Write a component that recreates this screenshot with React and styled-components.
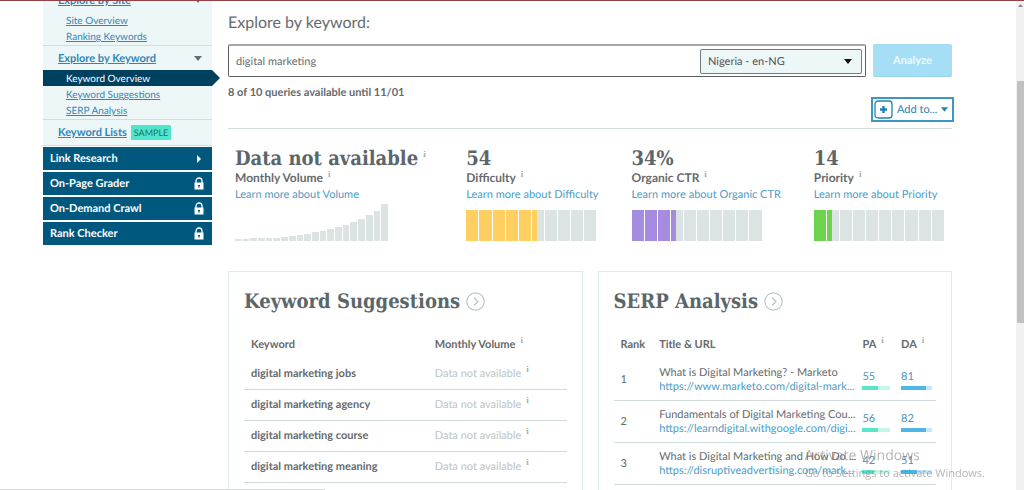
import React, { useState } from "react";
import styled, { createGlobalStyle, css } from "styled-components";

const GlobalStyle = createGlobalStyle`
  * {
    box-sizing: border-box;
  }
  body {
    margin: 0;
    background: #fff;
    color: #666a6c;
    font-family: Lato, "Liberation Sans", sans-serif;
    font-size: 11px;
    line-height: 16px;
    text-rendering: geometricPrecision;
  }
  button, input, select {
    font: inherit;
    color: inherit;
    text-rendering: inherit;
  }
  a {
    color: #4a9cc7;
    text-decoration: none;
  }
`;

const Shell = styled.div`
  display: grid;
  grid-template-columns: 1fr 8px;
  height: 100vh;
  overflow: hidden;
  border-top: 1px solid #963f44;
`;

const Page = styled.div`
  display: flex;
  gap: 16px;
  min-width: 0;
  padding: 0 64px 0 43px;
`;

/* scrollbar */

const ScrollTrack = styled.div`
  display: flex;
  flex-direction: column;
  align-items: flex-end;
  background: #f1f1f1;
`;

const ScrollArrow = styled.svg`
  width: 7px;
  height: 10px;
  fill: #8a8a8a;
`;

const ScrollThumb = styled.div`
  width: 7px;
  height: 46%;
  margin-top: 70px;
  background: #c1c1c1;
`;

/* side navigation */

const Sidebar = styled.nav`
  flex: 0 0 169px;
  margin-top: -13px;
`;

const NavGroup = styled.section`
  padding-bottom: 1px;
  border-bottom: 1px solid #d3dddf;
  background: #eef7f8;
`;

const NavHeading = styled.div`
  display: flex;
  align-items: center;
  gap: 4px;
  height: 24px;
  padding: 0 10px 0 15px;
  font-weight: bold;
  line-height: 18px;

  a {
    padding-top: 1px;
    color: #2e86b8;
    text-decoration: underline;
  }
  svg {
    margin-left: auto;
  }
`;

const NavItem = styled.a`
  position: relative;
  display: block;
  height: 16px;
  padding-left: 23px;
  font-size: 10px;
  line-height: 18px;
  color: #2e86b8;
  text-decoration: underline;

  ${(props) =>
    props.$active &&
    css`
      background: #00405f;
      color: #fff;
      text-decoration: none;

      &::after {
        content: "";
        position: absolute;
        top: 0;
        left: 100%;
        border: 8px solid transparent;
        border-left-color: #00405f;
        border-right-width: 0;
      }
    `}
`;

const Badge = styled.span`
  padding: 0 3px;
  border-radius: 1px;
  background: #50e6cc;
  color: #23715f;
  font-size: 9px;
  font-weight: normal;
  line-height: 15px;
`;

const ToolList = styled.div`
  display: grid;
  gap: 2px;
  padding-top: 1px;
`;

const ToolLink = styled.a`
  display: flex;
  align-items: center;
  justify-content: space-between;
  height: 23px;
  padding: 0 8px 0 7px;
  background: #00587f;
  color: #fff;
  font-weight: bold;
`;

/* main column */

const Main = styled.main`
  flex: 1;
  min-width: 0;
`;

const Title = styled.h1`
  margin: 12px 0 11px;
  font-size: 16px;
  font-weight: normal;
  line-height: 20px;
`;

const SearchForm = styled.form`
  display: flex;
  gap: 7px;
`;

const SearchBox = styled.div`
  display: flex;
  flex: 1;
  align-items: center;
  height: 33px;
  padding-right: 3px;
  border: 1px solid #5d5f66;
  border-top: 2px solid #a5a5ab;
  border-radius: 2px;
`;

const SearchInput = styled.input`
  flex: 1;
  min-width: 0;
  padding: 2px 7px 0;
  border: 0;
  outline: 0;
  background: none;
`;

const SelectWrap = styled.div`
  display: grid;
  flex: 0 0 162px;
  align-items: center;

  > * {
    grid-area: 1 / 1;
  }
  svg {
    justify-self: end;
    margin-right: 10px;
    pointer-events: none;
  }
`;

const LocaleSelect = styled.select`
  appearance: none;
  height: 25px;
  padding: 1px 7px 0;
  border: 1px solid #777b7d;
  border-radius: 2px;
  background: #eef7f7;
  color: #4c5052;
`;

const AnalyzeButton = styled.button`
  width: 79px;
  padding-top: 3px;
  border: 0;
  border-bottom: 1px solid #98d3ea;
  border-radius: 2px;
  background: #a6dff5;
  color: #eefaff;
  font-weight: bold;
`;

const QueryBar = styled.div`
  display: flex;
  justify-content: space-between;
  padding: 8px 0;
  border-bottom: 1px solid #d3dfdf;
`;

const AddButton = styled.button`
  display: flex;
  align-items: center;
  gap: 4px;
  width: 79px;
  height: 21px;
  margin-top: 14px;
  padding: 0 4px 0 1px;
  border: 0;
  outline: 2px solid #3d96c3;
  background: #fff;
  color: #2e7fae;
  white-space: nowrap;

  svg {
    flex: none;
  }
  svg:last-child {
    margin-left: auto;
  }
`;

const Metrics = styled.section`
  display: grid;
  grid-template-columns: 231fr 165fr 182fr 138fr;
  padding: 17px 0 30px 7px;
`;

const MetricValue = styled.div`
  color: #5c6669;
  font-family: "Roboto Slab", "DejaVu Serif Condensed", "DejaVu Serif", serif;
  font-size: 20px;
  font-stretch: condensed;
  font-weight: bold;
  line-height: 24px;
  white-space: nowrap;
`;

const MetricLabel = styled.div`
  font-size: 12px;
  font-weight: bold;
`;

const MetricLink = styled.a`
  display: block;
  height: 16px;
  line-height: 18px;
`;

const Chart = styled.div`
  display: grid;
  grid-auto-columns: 1fr;
  grid-auto-flow: column;
  align-items: end;
  gap: 1px;
  width: ${(props) => props.$width}px;
  height: 39px;
`;

const Bar = styled.div`
  background: #dbe4e3;
`;

const Segment = styled.div`
  height: 31px;
  background: linear-gradient(
    90deg,
    ${(props) => props.$color} ${(props) => props.$fill}%,
    #dbe4e3 ${(props) => props.$fill}%
  );
`;

const InfoMark = styled.sup`
  margin-left: 5px;
  color: #a3acae;
  font-family: "Liberation Serif", serif;
  font-size: 9px;
  font-weight: bold;
  line-height: 0;
`;

/* panels */

const Panels = styled.div`
  display: grid;
  grid-template-columns: 1fr 1fr;
  gap: 15px;
`;

const Panel = styled.section`
  min-width: 0;
  padding: 15px 15px 40px;
  border: 1px solid #dfe9e9;
`;

const PanelTitle = styled.h2`
  display: flex;
  align-items: center;
  gap: 6px;
  margin: 0 0 16px;
  color: #5c6669;
  font-family: "Roboto Slab", "DejaVu Serif Condensed", "DejaVu Serif", serif;
  font-size: 20px;
  font-stretch: condensed;
  line-height: 28px;
  white-space: nowrap;
`;

const Table = styled.table`
  width: 100%;
  table-layout: fixed;
  border-collapse: separate;
  border-spacing: 0;

  th {
    height: 28px;
    padding: 0 0 0 7px;
    text-align: left;
  }
  td {
    height: ${(props) => props.$rowHeight}px;
    padding: 0 0 0 7px;
    border-bottom: 1px solid #cfdcdb;
  }
`;

const Muted = styled.span`
  color: #bcc4c4;
`;

const Line = styled.div`
  line-height: 14px;
  white-space: nowrap;
`;

const Score = styled.div`
  color: #4a93bb;
  line-height: 14px;
`;

const ScoreTrack = styled.div`
  height: 4px;
  margin: 2px 4px 0 0;
  background: ${(props) => props.$track};
`;

const ScoreFill = styled.div`
  height: 100%;
  background: ${(props) => props.$color};
`;

/* desktop overlays */

const Watermark = styled.div`
  position: fixed;
  right: 39px;
  bottom: 7px;
  color: rgba(130, 130, 130, 0.6);
  font-family: "Open Sans", "Noto Sans", sans-serif;
  font-size: 11px;
  line-height: 18px;
  pointer-events: none;

  strong {
    display: block;
    font-size: 14px;
    font-weight: normal;
  }
`;

const StatusBubble = styled.div`
  position: fixed;
  bottom: 0;
  left: 0;
  width: 325px;
  height: 1px;
  background: #dadcdc;
`;

const suggestions = [
  "digital marketing jobs",
  "digital marketing agency",
  "digital marketing course",
  "digital marketing meaning",
];

const results = [
  {
    title: "What is Digital Marketing? - Marketo",
    url: "https://www.marketo.com/digital-mark...",
    pa: 55,
    da: 81,
  },
  {
    title: "Fundamentals of Digital Marketing Cou...",
    url: "https://learndigital.withgoogle.com/digi...",
    pa: 56,
    da: 82,
  },
  {
    title: "What is Digital Marketing and How Do ...",
    url: "https://disruptiveadvertising.com/mark...",
    pa: 42,
    da: 51,
  },
];

const metrics = [
  { value: 54, label: "Difficulty", color: "#ffd061" },
  { value: 34, unit: "%", label: "Organic CTR", color: "#a68ce0" },
  { value: 14, label: "Priority", color: "#6bd44c" },
];

const volumeBars = [
  2, 2, 3, 3, 3, 3, 4, 5, 6, 7, 9, 10, 12, 14, 16, 19, 22, 26, 30, 37,
];

function Caret({ color = "currentColor", width = 8 }) {
  return (
    <svg width={width} height="5" viewBox="0 0 8 5" fill={color}>
      <path d="M0 0h8L4 5z" />
    </svg>
  );
}

function LockIcon() {
  return (
    <svg width="10" height="13" viewBox="0 0 10 13">
      <path d="M2 6V4a3 3 0 0 1 6 0v2" fill="none" stroke="#fff" strokeWidth="1.3" />
      <path
        d="M.5 5.5h9v7h-9zM4 8v1.2h.5v1.6h1V9.2H6V8z"
        fill="#fff"
        fillRule="evenodd"
      />
    </svg>
  );
}

function CircleArrow() {
  return (
    <svg width="19" height="19" viewBox="0 0 19 19" fill="none" stroke="#b9c6c6">
      <circle cx="9.5" cy="9.5" r="8.7" strokeWidth="1.2" />
      <path d="M8 5.5l4 4-4 4" strokeWidth="1.3" />
    </svg>
  );
}

function PlusBox() {
  return (
    <svg width="19" height="19" viewBox="0 0 19 19" fill="none" stroke="#2580b1">
      <rect x="1" y="1" width="17" height="17" rx="3" strokeWidth="1.3" />
      <path d="M9.5 6v7M6 9.5h7" strokeWidth="2.4" />
    </svg>
  );
}

function Meter({ value, color }) {
  return (
    <Chart $width={130}>
      {Array.from({ length: 10 }, (_, i) => (
        <Segment
          key={i}
          $color={color}
          $fill={Math.max(0, Math.min(100, (value - i * 10) * 10))}
        />
      ))}
    </Chart>
  );
}

function ScoreCell({ value, color, track }) {
  return (
    <td>
      <Score>{value}</Score>
      <ScoreTrack $track={track}>
        <ScoreFill $color={color} style={{ width: `${value}%` }} />
      </ScoreTrack>
    </td>
  );
}

function SideNav() {
  return (
    <Sidebar>
      <NavGroup>
        <NavHeading>
          <a href="#site">Explore by Site</a>
          <Caret color="#5f7075" />
        </NavHeading>
        <NavItem href="#site-overview">Site Overview</NavItem>
        <NavItem href="#ranking">Ranking Keywords</NavItem>
      </NavGroup>
      <NavGroup>
        <NavHeading>
          <a href="#keyword">Explore by Keyword</a>
          <Caret color="#5f7075" />
        </NavHeading>
        <NavItem href="#overview" $active>
          Keyword Overview
        </NavItem>
        <NavItem href="#suggestions">Keyword Suggestions</NavItem>
        <NavItem href="#serp">SERP Analysis</NavItem>
      </NavGroup>
      <NavGroup>
        <NavHeading>
          <a href="#lists">Keyword Lists</a>
          <Badge>SAMPLE</Badge>
        </NavHeading>
      </NavGroup>
      <ToolList>
        <ToolLink href="#links">
          Link Research
          <svg width="10" height="8" viewBox="0 0 10 8" fill="#fff">
            <path d="M3 0l4 4-4 4z" />
          </svg>
        </ToolLink>
        {["On-Page Grader", "On-Demand Crawl", "Rank Checker"].map((name) => (
          <ToolLink href="#locked" key={name}>
            {name}
            <LockIcon />
          </ToolLink>
        ))}
      </ToolList>
    </Sidebar>
  );
}

export default function App() {
  const [query, setQuery] = useState("digital marketing");

  return (
    <>
      <GlobalStyle />
      <Shell>
        <Page>
          <SideNav />
          <Main>
            <Title>Explore by keyword:</Title>
            <SearchForm onSubmit={(e) => e.preventDefault()}>
              <SearchBox>
                <SearchInput
                  aria-label="Keyword"
                  value={query}
                  onChange={(e) => setQuery(e.target.value)}
                />
                <SelectWrap>
                  <LocaleSelect aria-label="Locale">
                    <option>Nigeria - en-NG</option>
                  </LocaleSelect>
                  <Caret color="#111" />
                </SelectWrap>
              </SearchBox>
              <AnalyzeButton>Analyze</AnalyzeButton>
            </SearchForm>
            <QueryBar>
              <strong>8 of 10 queries available until 11/01</strong>
              <AddButton>
                <PlusBox />
                Add to...
                <Caret width={7} />
              </AddButton>
            </QueryBar>

            <Metrics>
              <div>
                <MetricValue>
                  Data not available<InfoMark>i</InfoMark>
                </MetricValue>
                <MetricLabel>
                  Monthly Volume<InfoMark>i</InfoMark>
                </MetricLabel>
                <MetricLink href="#volume">Learn more about Volume</MetricLink>
                <Chart $width={153}>
                  {volumeBars.map((height, i) => (
                    <Bar key={i} style={{ height }} />
                  ))}
                </Chart>
              </div>
              {metrics.map(({ value, unit, label, color }) => (
                <div key={label}>
                  <MetricValue>
                    {value}
                    {unit}
                  </MetricValue>
                  <MetricLabel>
                    {label}
                    <InfoMark>i</InfoMark>
                  </MetricLabel>
                  <MetricLink href="#metric">Learn more about {label}</MetricLink>
                  <Meter value={value} color={color} />
                </div>
              ))}
            </Metrics>

            <Panels>
              <Panel>
                <PanelTitle>
                  Keyword Suggestions <CircleArrow />
                </PanelTitle>
                <Table $rowHeight={31}>
                  <colgroup>
                    <col width="57%" />
                    <col />
                  </colgroup>
                  <thead>
                    <tr>
                      <th>Keyword</th>
                      <th>
                        Monthly Volume<InfoMark>i</InfoMark>
                      </th>
                    </tr>
                  </thead>
                  <tbody>
                    {suggestions.map((keyword) => (
                      <tr key={keyword}>
                        <td>
                          <strong>{keyword}</strong>
                        </td>
                        <td>
                          <Muted>Data not available</Muted>
                          <InfoMark>i</InfoMark>
                        </td>
                      </tr>
                    ))}
                  </tbody>
                </Table>
              </Panel>
              <Panel>
                <PanelTitle>
                  SERP Analysis <CircleArrow />
                </PanelTitle>
                <Table $rowHeight={42}>
                  <colgroup>
                    <col width="12%" />
                    <col />
                    <col width="12%" />
                    <col width="13%" />
                  </colgroup>
                  <thead>
                    <tr>
                      <th>Rank</th>
                      <th>Title &amp; URL</th>
                      <th>
                        PA<InfoMark>i</InfoMark>
                      </th>
                      <th>
                        DA<InfoMark>i</InfoMark>
                      </th>
                    </tr>
                  </thead>
                  <tbody>
                    {results.map(({ title, url, pa, da }, i) => (
                      <tr key={url}>
                        <td>{i + 1}</td>
                        <td>
                          <Line>{title}</Line>
                          <Line>
                            <a href="#result">{url}</a>
                          </Line>
                        </td>
                        <ScoreCell value={pa} color="#57e6cc" track="#c3f7ed" />
                        <ScoreCell value={da} color="#4fb6e8" track="#c5e9f8" />
                      </tr>
                    ))}
                  </tbody>
                </Table>
              </Panel>
            </Panels>
          </Main>
        </Page>
        <ScrollTrack>
          <ScrollArrow viewBox="0 0 7 10">
            <path d="M1 6l2.500-3L6 6z" />
          </ScrollArrow>
          <ScrollThumb />
        </ScrollTrack>
      </Shell>
      <Watermark>
        <strong>Activate Windows</strong>
        Go to Settings to activate Windows.
      </Watermark>
      <StatusBubble />
    </>
  );
}
